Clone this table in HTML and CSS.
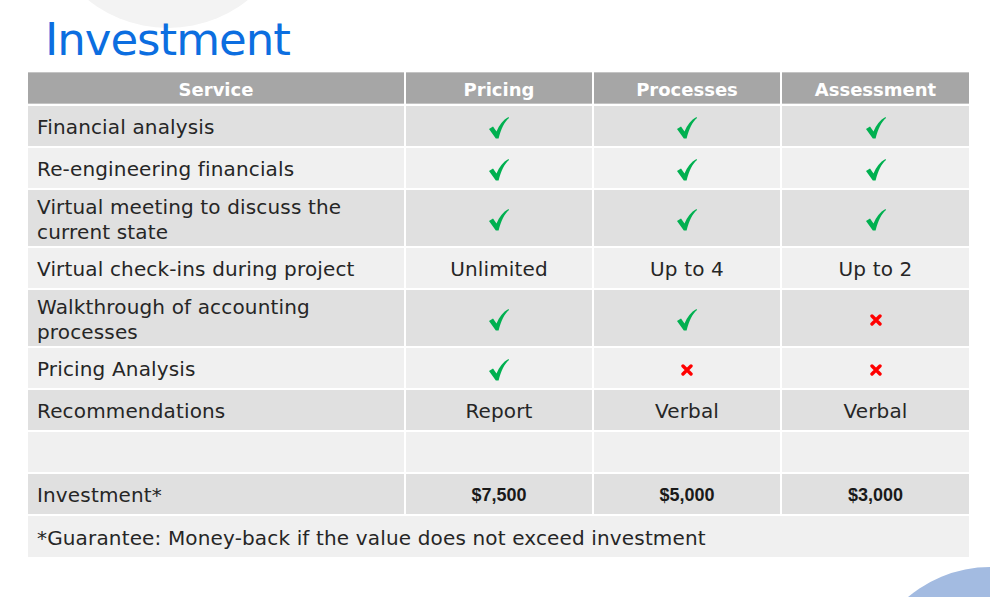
FILE: index.html
```html
<!DOCTYPE html>
<html>
<head>
<meta charset="utf-8">
<link rel="stylesheet" href="styles.css">
</head>
<body>
<div class="slide">
  <div class="blob blob-top"></div>
  <div class="blob blob-bottom"></div>
  <h1 class="title">Investment</h1>
  <div class="table">
    <div class="cell head">Service</div>
    <div class="cell head">Pricing</div>
    <div class="cell head">Processes</div>
    <div class="cell head">Assessment</div>

    <div class="cell svc odd">Financial analysis</div>
    <div class="cell mid odd"><svg class="chk" viewBox="0 0 20 22"><path d="M0 12 L4 9.6 L7.5 14.6 C10 8 14 3 19.5 0 L20 1 C15.5 5 12 11.5 9.6 21.5 L6.8 21.5 Z"/></svg></div>
    <div class="cell mid odd"><svg class="chk" viewBox="0 0 20 22"><path d="M0 12 L4 9.6 L7.5 14.6 C10 8 14 3 19.5 0 L20 1 C15.5 5 12 11.5 9.6 21.5 L6.8 21.5 Z"/></svg></div>
    <div class="cell mid odd"><svg class="chk" viewBox="0 0 20 22"><path d="M0 12 L4 9.6 L7.5 14.6 C10 8 14 3 19.5 0 L20 1 C15.5 5 12 11.5 9.6 21.5 L6.8 21.5 Z"/></svg></div>

    <div class="cell svc even">Re-engineering financials</div>
    <div class="cell mid even"><svg class="chk" viewBox="0 0 20 22"><path d="M0 12 L4 9.6 L7.5 14.6 C10 8 14 3 19.5 0 L20 1 C15.5 5 12 11.5 9.6 21.5 L6.8 21.5 Z"/></svg></div>
    <div class="cell mid even"><svg class="chk" viewBox="0 0 20 22"><path d="M0 12 L4 9.6 L7.5 14.6 C10 8 14 3 19.5 0 L20 1 C15.5 5 12 11.5 9.6 21.5 L6.8 21.5 Z"/></svg></div>
    <div class="cell mid even"><svg class="chk" viewBox="0 0 20 22"><path d="M0 12 L4 9.6 L7.5 14.6 C10 8 14 3 19.5 0 L20 1 C15.5 5 12 11.5 9.6 21.5 L6.8 21.5 Z"/></svg></div>

    <div class="cell svc odd">Virtual meeting to discuss the<br>current state</div>
    <div class="cell mid odd"><svg class="chk" viewBox="0 0 20 22"><path d="M0 12 L4 9.6 L7.5 14.6 C10 8 14 3 19.5 0 L20 1 C15.5 5 12 11.5 9.6 21.5 L6.8 21.5 Z"/></svg></div>
    <div class="cell mid odd"><svg class="chk" viewBox="0 0 20 22"><path d="M0 12 L4 9.6 L7.5 14.6 C10 8 14 3 19.5 0 L20 1 C15.5 5 12 11.5 9.6 21.5 L6.8 21.5 Z"/></svg></div>
    <div class="cell mid odd"><svg class="chk" viewBox="0 0 20 22"><path d="M0 12 L4 9.6 L7.5 14.6 C10 8 14 3 19.5 0 L20 1 C15.5 5 12 11.5 9.6 21.5 L6.8 21.5 Z"/></svg></div>

    <div class="cell svc even">Virtual check-ins during project</div>
    <div class="cell mid even">Unlimited</div>
    <div class="cell mid even">Up to 4</div>
    <div class="cell mid even">Up to 2</div>

    <div class="cell svc odd">Walkthrough of accounting<br>processes</div>
    <div class="cell mid odd"><svg class="chk" viewBox="0 0 20 22"><path d="M0 12 L4 9.6 L7.5 14.6 C10 8 14 3 19.5 0 L20 1 C15.5 5 12 11.5 9.6 21.5 L6.8 21.5 Z"/></svg></div>
    <div class="cell mid odd"><svg class="chk" viewBox="0 0 20 22"><path d="M0 12 L4 9.6 L7.5 14.6 C10 8 14 3 19.5 0 L20 1 C15.5 5 12 11.5 9.6 21.5 L6.8 21.5 Z"/></svg></div>
    <div class="cell mid odd"><svg class="xx" viewBox="0 0 12 12"><path d="M2 2 L10 10 M10 2 L2 10"/></svg></div>

    <div class="cell svc even">Pricing Analysis</div>
    <div class="cell mid even"><svg class="chk" viewBox="0 0 20 22"><path d="M0 12 L4 9.6 L7.5 14.6 C10 8 14 3 19.5 0 L20 1 C15.5 5 12 11.5 9.6 21.5 L6.8 21.5 Z"/></svg></div>
    <div class="cell mid even"><svg class="xx" viewBox="0 0 12 12"><path d="M2 2 L10 10 M10 2 L2 10"/></svg></div>
    <div class="cell mid even"><svg class="xx" viewBox="0 0 12 12"><path d="M2 2 L10 10 M10 2 L2 10"/></svg></div>

    <div class="cell svc odd">Recommendations</div>
    <div class="cell mid odd">Report</div>
    <div class="cell mid odd">Verbal</div>
    <div class="cell mid odd">Verbal</div>

    <div class="cell svc even"></div>
    <div class="cell mid even"></div>
    <div class="cell mid even"></div>
    <div class="cell mid even"></div>

    <div class="cell svc odd">Investment*</div>
    <div class="cell mid odd price">$7,500</div>
    <div class="cell mid odd price">$5,000</div>
    <div class="cell mid odd price">$3,000</div>

    <div class="cell svc even full">*Guarantee: Money-back if the value does not exceed investment</div>
  </div>
</div>
</body>
</html>
```

FILE: styles.css
```css
html, body {
  margin: 0;
  padding: 0;
  background: #ffffff;
}
.slide {
  position: relative;
  width: 990px;
  height: 597px;
  overflow: hidden;
  font-family: "DejaVu Sans", sans-serif;
}
.blob {
  position: absolute;
  border-radius: 50%;
}
.blob-top {
  left: 40px;
  top: -228px;
  width: 256px;
  height: 256px;
  background: #f3f3f3;
}
.blob-bottom {
  left: 863px;
  top: 567px;
  width: 254px;
  height: 254px;
  background: #a3bbe1;
}
.title {
  position: relative;
  margin: 0;
  padding: 12px 0 0 45px;
  height: 61px;
  box-sizing: border-box;
  font-family: "DejaVu Sans", sans-serif;
  font-weight: normal;
  font-size: 45px;
  line-height: 56px;
  color: #0c6ee0;
  letter-spacing: -1px;
}
.table {
  position: relative;
  margin-top: 11px;
  margin-left: 28px;
  display: grid;
  grid-template-columns: 376px 186px 186px 187px;
  grid-template-rows: 32px 40px 40px 56px 40px 56px 40px 40px 40px 40px 41px;
  column-gap: 2px;
  row-gap: 2px;
  width: 941px;
}
.cell {
  box-sizing: border-box;
  display: flex;
  align-items: center;
  padding-top: 3px;
  font-size: 20px;
  letter-spacing: 0.15px;
  color: #262626;
  line-height: 25px;
}
.head {
  background: #a6a6a6;
  border-top: 1px solid #c4c4c4;
  border-bottom: 1px solid #c4c4c4;
  color: #ffffff;
  font-weight: bold;
  justify-content: center;
  font-size: 18px;
  letter-spacing: 0;
}
.odd { background: #e0e0e0; }
.even { background: #f0f0f0; }
.svc { padding-left: 9px; }
.mid { justify-content: center; }
.price {
  font-family: "Liberation Sans", sans-serif;
  font-weight: bold;
  font-size: 18px;
  letter-spacing: 0;
  color: #1a1a1a;
}
.full { grid-column: 1 / -1; }
.chk {
  width: 20px;
  height: 22px;
  fill: #00b050;
}
.xx {
  width: 12px;
  height: 12px;
  stroke: #ff0000;
  stroke-width: 3.4;
  stroke-linecap: round;
  fill: none;
}
```
